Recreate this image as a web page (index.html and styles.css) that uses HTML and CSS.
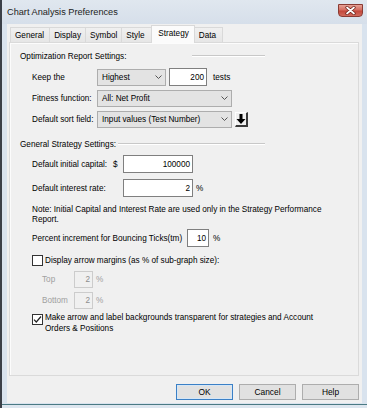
FILE: index.html
```html
<!DOCTYPE html>
<html>
<head>
<meta charset="utf-8">
<link rel="stylesheet" href="styles.css">
</head>
<body>
<div class="window">
  <div class="titlebar">
    <span class="title">Chart Analysis Preferences</span>
    <div class="close">
      <svg width="11" height="9" viewBox="0 0 11 9"><path d="M2 1.5l7 6M9 1.5l-7 6" stroke="#6b2019" stroke-width="3.2" stroke-linecap="round"/><path d="M2 1.5l7 6M9 1.5l-7 6" stroke="#fff" stroke-width="1.7" stroke-linecap="round"/></svg>
    </div>
  </div>
  <div class="client">
    <div class="tabs">
      <div class="tab">General</div>
      <div class="tab tab-narrow">Display</div>
      <div class="tab tab-narrow">Symbol</div>
      <div class="tab tab-style">Style</div>
      <div class="tab tab-active">Strategy</div>
      <div class="tab">Data</div>
    </div>
    <div class="panel">
      <div class="group-head">
        <span class="group-title group-title-wide">Optimization Report Settings:</span>
        <span class="etch"></span>
      </div>
      <div class="row row-keep">
        <span class="lbl lbl-combo">Keep the</span>
        <div class="combo combo-short"><span>Highest</span><svg class="chev" width="7" height="4" viewBox="0 0 7 4"><path d="M0.5 0.5l3 3 3-3" stroke="#555" fill="none"/></svg></div>
        <div class="field field-tests">200</div>
        <span class="unit unit-tests">tests</span>
      </div>
      <div class="row row-tight">
        <span class="lbl lbl-combo">Fitness function:</span>
        <div class="combo combo-long"><span>All: Net Profit</span><svg class="chev" width="7" height="4" viewBox="0 0 7 4"><path d="M0.5 0.5l3 3 3-3" stroke="#555" fill="none"/></svg></div>
      </div>
      <div class="row row-tight">
        <span class="lbl lbl-combo">Default sort field:</span>
        <div class="combo combo-long"><span>Input values (Test Number)</span><svg class="chev" width="7" height="4" viewBox="0 0 7 4"><path d="M0.5 0.5l3 3 3-3" stroke="#555" fill="none"/></svg></div>
        <div class="arrow-btn"><svg width="10" height="12" viewBox="0 0 10 12"><path d="M3.5 1h3v5h3L5 11 0.5 6h3z" fill="#000"/></svg></div>
      </div>
      <div class="group-head group-head-second">
        <span class="group-title">General Strategy Settings:</span>
        <span class="etch"></span>
      </div>
      <div class="row row-cap">
        <span class="lbl lbl-cap">Default initial capital:</span>
        <span class="dollar">$</span>
        <div class="field field-money">100000</div>
      </div>
      <div class="row row-cap">
        <span class="lbl lbl-rate">Default interest rate:</span>
        <div class="field field-money">2</div>
        <span class="unit unit-pct">%</span>
      </div>
      <div class="note">Note: Initial Capital and Interest Rate are used only in the Strategy Performance<br>Report.</div>
      <div class="row row-pct">
        <span class="lbl lbl-pct">Percent increment for Bouncing Ticks(tm)</span>
        <div class="field field-small">10</div>
        <span class="unit unit-pct2">%</span>
      </div>
      <div class="check-row check-row-first">
        <span class="cb"></span>
        <span class="cb-text">Display arrow margins (as % of sub-graph size):</span>
      </div>
      <div class="row row-margin row-margin-top">
        <span class="lbl lbl-margin dim">Top</span>
        <div class="field field-tiny field-disabled">2</div>
        <span class="unit unit-margin dim">%</span>
      </div>
      <div class="row row-margin row-tight">
        <span class="lbl lbl-margin dim">Bottom</span>
        <div class="field field-tiny field-disabled">2</div>
        <span class="unit unit-margin dim">%</span>
      </div>
      <div class="check-row check-row-multi">
        <span class="cb cb-checked"><svg width="9" height="9" viewBox="0 0 9 9"><path d="M1 4.6l2.3 2.4L8 1.5" stroke="#222" stroke-width="1.2" fill="none"/></svg></span>
        <span class="cb-text cb-text-multi">Make arrow and label backgrounds transparent for strategies and Account<br>Orders &amp; Positions</span>
      </div>
    </div>
    <div class="buttons">
      <button class="btn btn-default">OK</button>
      <button class="btn">Cancel</button>
      <button class="btn">Help</button>
    </div>
  </div>
</div>
</body>
</html>
```

FILE: styles.css
```css
html, body {
  margin: 0;
  padding: 0;
}
body {
  width: 367px;
  height: 408px;
  overflow: hidden;
  font-family: "Liberation Sans", Arial, sans-serif;
  font-size: 8.2px;
  color: #000;
  background: #d9e3ee;
}
.window {
  height: 408px;
  box-sizing: border-box;
  border-left: 2px solid #3b4048;
  background: linear-gradient(to bottom, #d9e3ee 404px, #4b7a84 404px, #4b7a84 405px, #dde6ef 405px);
  display: flex;
  flex-direction: column;
}
.titlebar {
  height: 24px;
  flex: none;
  position: relative;
  display: flex;
  align-items: center;
  padding-left: 5px;
  background: linear-gradient(to bottom, #e0e7ef, #d6dfea);
}
.title {
  font-size: 9.2px;
  color: #222;
}
.close {
  position: absolute;
  right: 4px;
  top: 4px;
  width: 25px;
  height: 13px;
  box-sizing: border-box;
  border: 1px solid #8a3b33;
  border-radius: 0 0 4px 4px;
  background: linear-gradient(to bottom, #e6a296, #d56d60 45%, #c4483c 55%, #d16b5d);
  display: flex;
  align-items: center;
  justify-content: center;
}
.client {
  flex: none;
  height: 379px;
  margin: 0 5px;
  background: #f0f0f0;
  display: flex;
  flex-direction: column;
}
.tabs {
  height: 18px;
  flex: none;
  display: flex;
  align-items: flex-end;
  padding-left: 3px;
  position: relative;
  z-index: 1;
}
.tab {
  height: 15px;
  box-sizing: border-box;
  padding: 0 5px 0 4px;
  min-width: 29px;
  border: 1px solid #d9d9d9;
  border-bottom: none;
  margin-right: -1px;
  background: linear-gradient(to bottom, #f0f0f0, #e6e6e6);
  display: flex;
  align-items: center;
  white-space: nowrap;
}
.tab-narrow {
  padding: 0 4px;
}
.tab-style {
  min-width: 33px;
}
.tab-active {
  height: 18px;
  margin: 0 -1px -1px -2px;
  padding: 3px 5px 0 6px;
  background: #fbfbfb;
  position: relative;
  z-index: 2;
  align-items: flex-start;
}
.panel {
  flex: none;
  height: 334px;
  box-sizing: border-box;
  margin: 0 3px 0 2px;
  border: 1px solid #dadada;
  box-shadow: inset 1px 1px #fcfcfc;
  background: #f0f0f0;
  padding: 7px 0 0 10px;
}
.group-head {
  display: flex;
  align-items: center;
  height: 12px;
  width: 245px;
}
.group-head-second {
  margin-top: 9px;
}
.group-title {
  white-space: nowrap;
  padding-right: 2px;
  flex: none;
}
.group-title-wide {
  width: 170px;
}
.etch {
  flex: 1;
  height: 0;
  border-top: 1px solid #c8c8c8;
  border-bottom: 1px solid #ffffff;
}
.row {
  display: flex;
  align-items: center;
  height: 20px;
  padding-left: 12px;
}
.row-keep {
  margin-top: 5px;
}
.row-tight {
  margin-top: 1px;
}
.row-cap {
  margin-top: 4px;
}
.row-pct {
  margin-top: 3px;
}
.row-margin {
  padding-left: 22px;
}
.row-margin-top {
  margin-top: 3px;
}
.lbl {
  white-space: nowrap;
  flex: none;
}
.lbl-combo {
  width: 65px;
}
.lbl-cap {
  width: 81px;
}
.lbl-rate {
  width: 91px;
}
.lbl-pct {
  width: 155px;
}
.lbl-margin {
  width: 32px;
}
.dim {
  color: #a0a0a0;
}
.dollar {
  width: 10px;
  flex: none;
}
.combo {
  height: 17px;
  box-sizing: border-box;
  border: 1px solid #adadad;
  background: #e3e3e3;
  display: flex;
  align-items: center;
  justify-content: space-between;
  padding: 0 3px 0 4px;
  flex: none;
  white-space: nowrap;
}
.combo-short {
  width: 69px;
}
.combo-long {
  width: 135px;
}
.chev {
  flex: none;
}
.field {
  height: 18px;
  box-sizing: border-box;
  border: 1px solid #7f7f7f;
  background: #fff;
  display: flex;
  align-items: center;
  justify-content: flex-end;
  padding-right: 2px;
  flex: none;
}
.field-tests {
  width: 38px;
  margin-left: 3px;
}
.field-money {
  width: 70px;
}
.field-small {
  width: 22px;
}
.field-tiny {
  width: 19px;
  height: 17px;
}
.field-disabled {
  border-color: #cccccc;
  background: #f0f0f0;
  color: #8d8d8d;
}
.unit-tests {
  margin-left: 6px;
}
.unit-pct {
  margin-left: 3px;
}
.unit-pct2 {
  margin-left: 4px;
}
.unit-margin {
  margin-left: 3px;
}
.arrow-btn {
  margin-left: 3px;
  width: 13px;
  height: 15px;
  box-sizing: border-box;
  border-style: solid;
  border-width: 1px 2px 2px 1px;
  border-color: #ffffff #3a3a3a #3a3a3a #ffffff;
  display: flex;
  align-items: center;
  justify-content: center;
  flex: none;
}
.note {
  margin-top: 7px;
  padding-left: 12px;
  line-height: 10px;
  white-space: nowrap;
}
.check-row {
  display: flex;
  padding-left: 12px;
}
.check-row-first {
  margin-top: 6px;
  height: 12px;
  align-items: center;
}
.check-row-multi {
  margin-top: 3px;
  align-items: flex-start;
}
.cb {
  width: 11px;
  height: 11px;
  box-sizing: border-box;
  border: 1px solid #333;
  background: #fff;
  margin-right: 2px;
  flex: none;
  display: flex;
  align-items: center;
  justify-content: center;
}
.cb-checked {
  margin-top: 1px;
}
.cb-text {
  white-space: nowrap;
}
.cb-text-multi {
  line-height: 10.5px;
}
.buttons {
  display: flex;
  justify-content: flex-end;
  gap: 6px;
  margin: 8px 3px 0 0;
}
.btn {
  width: 57px;
  height: 16px;
  box-sizing: border-box;
  border: 1px solid #adadad;
  background: #e1e1e1;
  font-family: inherit;
  font-size: 8.4px;
  color: #000;
  padding: 0;
  margin: 0;
  display: flex;
  align-items: center;
  justify-content: center;
}
.btn-default {
  border-color: #3b80c6;
  box-shadow: inset 0 0 0 1px #d6e6f5;
}
```
